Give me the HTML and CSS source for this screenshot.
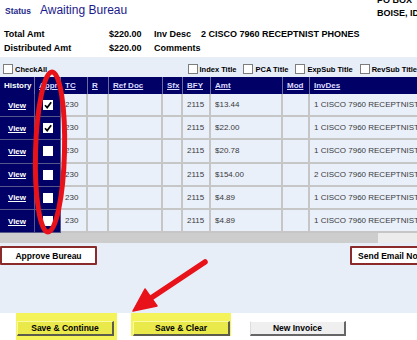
FILE: index.html
```html
<!DOCTYPE html>
<html lang="en">
<head>
    <meta charset="UTF-8">
    <title>Invoice - Awaiting Bureau</title>
    <link rel="stylesheet" href="styles.css">
</head>
<body>

<div class="page">

    <!--status and summary-->
    <div class="header">
        <div class="status_row">
            <div class="status">
                <span class="status_label">Status</span>
                <span class="status_value">Awaiting Bureau</span>
            </div>
            <div class="address">PO BOX<br>BOISE, ID</div>
        </div>
        <div class="summary">
            <span>Total Amt</span><span>$220.00</span><span>Inv Desc</span><span>2 CISCO 7960 RECEPTNIST PHONES</span>
            <span>Distributed Amt</span><span>$220.00</span><span>Comments</span><span></span>
        </div>
    </div>

    <div class="panel">

        <!--title toggles-->
        <div class="title_options">
            <label class="opt opt_first"><span class="cb"></span>CheckAll</label>
            <label class="opt"><span class="cb"></span>Index Title</label>
            <label class="opt"><span class="cb"></span>PCA Title</label>
            <label class="opt"><span class="cb"></span>ExpSub Title</label>
            <label class="opt"><span class="cb"></span>RevSub Title</label>
        </div>

        <!--distribution lines-->
        <div class="grid_wrap">
            <table class="grid">
                <colgroup>
                    <col style="width:35px"><col style="width:26px"><col style="width:27px"><col style="width:21px">
                    <col style="width:54px"><col style="width:20px"><col style="width:28px"><col style="width:72px">
                    <col style="width:27px"><col style="width:150px">
                </colgroup>
                <thead>
                <tr>
                    <th class="plain">History</th>
                    <th><a href="#">Appr</a></th>
                    <th><a href="#">TC</a></th>
                    <th><a href="#">R</a></th>
                    <th><a href="#">Ref Doc</a></th>
                    <th><a href="#">Sfx</a></th>
                    <th><a href="#">BFY</a></th>
                    <th><a href="#">Amt</a></th>
                    <th><a href="#">Mod</a></th>
                    <th><a href="#">InvDes</a></th>
                </tr>
                </thead>
                <tbody>
                <tr>
                    <td class="frozen"><a href="#">View</a></td>
                    <td class="frozen"><span class="box"><svg viewBox="0 0 10 10"><path d="M2 5.2 L4.2 7.6 L8.2 2.2"/></svg></span></td>
                    <td>230</td><td></td><td></td><td></td><td>2115</td><td>$13.44</td><td></td><td>1 CISCO 7960 RECEPTNIST PHONE</td>
                </tr>
                <tr>
                    <td class="frozen"><a href="#">View</a></td>
                    <td class="frozen"><span class="box"><svg viewBox="0 0 10 10"><path d="M2 5.2 L4.2 7.6 L8.2 2.2"/></svg></span></td>
                    <td>230</td><td></td><td></td><td></td><td>2115</td><td>$22.00</td><td></td><td>1 CISCO 7960 RECEPTNIST PHONE</td>
                </tr>
                <tr>
                    <td class="frozen"><a href="#">View</a></td>
                    <td class="frozen"><span class="box"></span></td>
                    <td>230</td><td></td><td></td><td></td><td>2115</td><td>$20.78</td><td></td><td>1 CISCO 7960 RECEPTNIST PHONE</td>
                </tr>
                <tr>
                    <td class="frozen"><a href="#">View</a></td>
                    <td class="frozen"><span class="box"></span></td>
                    <td>230</td><td></td><td></td><td></td><td>2115</td><td>$154.00</td><td></td><td>2 CISCO 7960 RECEPTNIST PHONE</td>
                </tr>
                <tr>
                    <td class="frozen"><a href="#">View</a></td>
                    <td class="frozen"><span class="box"></span></td>
                    <td>230</td><td></td><td></td><td></td><td>2115</td><td>$4.89</td><td></td><td>1 CISCO 7960 RECEPTNIST PHONE</td>
                </tr>
                <tr>
                    <td class="frozen"><a href="#">View</a></td>
                    <td class="frozen"><span class="box"></span></td>
                    <td>230</td><td></td><td></td><td></td><td>2115</td><td>$4.89</td><td></td><td>1 CISCO 7960 RECEPTNIST PHONE</td>
                </tr>
                </tbody>
            </table>
        </div>

        <!--horizontal scroll bar-->
        <div class="hscroll"><div class="hscroll_rest"></div></div>

        <div class="action_row">
            <button class="btn_outline">Approve Bureau</button>
            <button class="btn_outline btn_email">Send Email Notification</button>
        </div>
    </div>

    <div class="footer">
        <div class="highlight hl_tall"><button class="btn_save">Save &amp; Continue</button></div>
        <div class="highlight"><button class="btn_save">Save &amp; Clear</button></div>
        <button class="btn_plain">New Invoice</button>
    </div>

    <!--red markup drawn over the screenshot-->
    <svg class="markup" width="417" height="340" viewBox="0 0 417 340">
        <ellipse cx="50" cy="152" rx="14.5" ry="80" transform="rotate(1.5 50 152)" fill="none" stroke="#e8121a" stroke-width="5"/>
        <line x1="205" y1="262" x2="148" y2="300" stroke="#e8121a" stroke-width="5.5" stroke-linecap="round"/>
        <polygon points="133,311 145,289 157,306" fill="#e8121a" stroke="#e8121a" stroke-width="1.5" stroke-linejoin="round"/>
    </svg>
</div>

</body>
</html>
```

FILE: styles.css
```css
body, html {
    margin: 0;
    padding: 0;
    background: #fff;
    font-family: "Liberation Sans", Arial, sans-serif;
    color: #000;
}

.page {
    position: relative;
    width: 417px;
    height: 340px;
    overflow: hidden;
}

/* header */
.header {
    display: flex;
    height: 57px;
    flex-direction: column;
}

.status_row {
    display: flex;
    justify-content: space-between;
    align-items: flex-start;
}

.status {
    display: flex;
    align-items: baseline;
    padding: 3px 0 0 5px;
    line-height: 14px;
}

.status_label {
    font-size: 8.5px;
    font-weight: bold;
    color: #1f2a8a;
}

.status_value {
    margin-left: 9px;
    font-size: 12px;
    color: #1a1a8c;
}

.address {
    width: 40px;
    margin-top: -6px;
    font-size: 9px;
    font-weight: bold;
    line-height: 12.5px;
    white-space: nowrap;
}

.summary {
    display: grid;
    grid-template-columns: 105px 45px 47px auto;
    margin-top: 8px;
    padding-left: 4px;
    font-size: 9px;
    font-weight: bold;
    line-height: 14px;
    white-space: nowrap;
}

/* light blue panel */
.panel {
    display: flex;
    height: 256px;
    flex-direction: column;
    background: #e7eef8;
}

.title_options {
    display: flex;
    height: 20px;
    align-items: flex-end;
    padding: 0 0 3px 3px;
    box-sizing: border-box;
    gap: 7px;
    font-size: 7.5px;
    font-weight: bold;
    white-space: nowrap;
}

.opt {
    display: flex;
    align-items: center;
    gap: 2px;
}

.opt_first {
    width: 189px;
}

.cb {
    display: inline-block;
    width: 10px;
    height: 10px;
    box-sizing: border-box;
    background: #fff;
    border: 1px solid #7d7d7d;
}

.grid_wrap {
    width: 417px;
    overflow: hidden;
}

.grid {
    width: 460px;
    table-layout: fixed;
    border-collapse: separate;
    border-spacing: 0;
    font-size: 8px;
}

.grid th {
    height: 17px;
    padding: 0 0 0 4px;
    background: #000066;
    border-right: 1px solid #6e6e9e;
    text-align: left;
    font-weight: bold;
    color: #fff;
    white-space: nowrap;
}

.grid th a {
    color: #dcdcff;
}

.grid tbody tr {
    height: 23.2px;
}

.grid td {
    padding: 0 0 0 4px;
    background: #e9f0fa;
    border-right: 2px solid #c6c6c6;
    border-bottom: 2px solid #c6c6c6;
    color: #3a3a3a;
    white-space: nowrap;
    overflow: hidden;
}

.grid td.frozen {
    padding: 0;
    background: #000066;
    border-right: 1px solid #56568a;
    border-bottom: 1px solid #56568a;
    text-align: center;
}

.grid td.frozen a {
    color: #fff;
    font-weight: bold;
}

.box {
    display: inline-block;
    width: 10px;
    height: 10px;
    background: #fff;
    vertical-align: middle;
}

.box svg {
    display: block;
    width: 10px;
    height: 10px;
    fill: none;
    stroke: #000;
    stroke-width: 1.7;
}

.hscroll {
    display: flex;
    height: 10px;
    justify-content: flex-end;
    background: #cdcdcd;
}

.hscroll_rest {
    width: 39px;
    background: #ececec;
}

.action_row {
    display: flex;
    justify-content: space-between;
    margin-top: 3px;
}

.btn_outline {
    width: 97px;
    height: 19px;
    padding: 0;
    background: #fff;
    border: 2px solid #8a2a2a;
    border-radius: 1px;
    font-family: "Liberation Sans", Arial, sans-serif;
    font-size: 8.5px;
    font-weight: bold;
    color: #000;
}

.btn_email {
    width: auto;
    margin-right: -44px;
    padding: 0 6px;
    white-space: nowrap;
}

/* footer buttons */
.footer {
    display: flex;
    align-items: flex-start;
    padding-left: 16px;
}

.highlight {
    padding: 8px 1px 0 1px;
    background: #f4f45a;
}

.hl_tall {
    padding: 8px 3px 4px 1px;
    margin-right: 14px;
}

.footer .highlight + .highlight {
    padding: 8px 1px 0 2px;
    margin-right: 19px;
}

.btn_save, .btn_plain {
    width: 97px;
    height: 15px;
    padding: 0;
    border-style: solid;
    border-width: 1px 2px 2px 1px;
    font-family: "Liberation Sans", Arial, sans-serif;
    font-size: 8.5px;
    font-weight: bold;
    color: #000;
    display: block;
}

.btn_save {
    background: #e9e94c;
    border-color: #fafaa0 #5c5c4c #5c5c4c #fafaa0;
}

.btn_plain {
    margin-top: 8px;
    width: 96px;
    background: #efefef;
    border-color: #fff #666 #666 #ddd;
}

.markup {
    position: absolute;
    left: 0;
    top: 0;
    pointer-events: none;
}
```
